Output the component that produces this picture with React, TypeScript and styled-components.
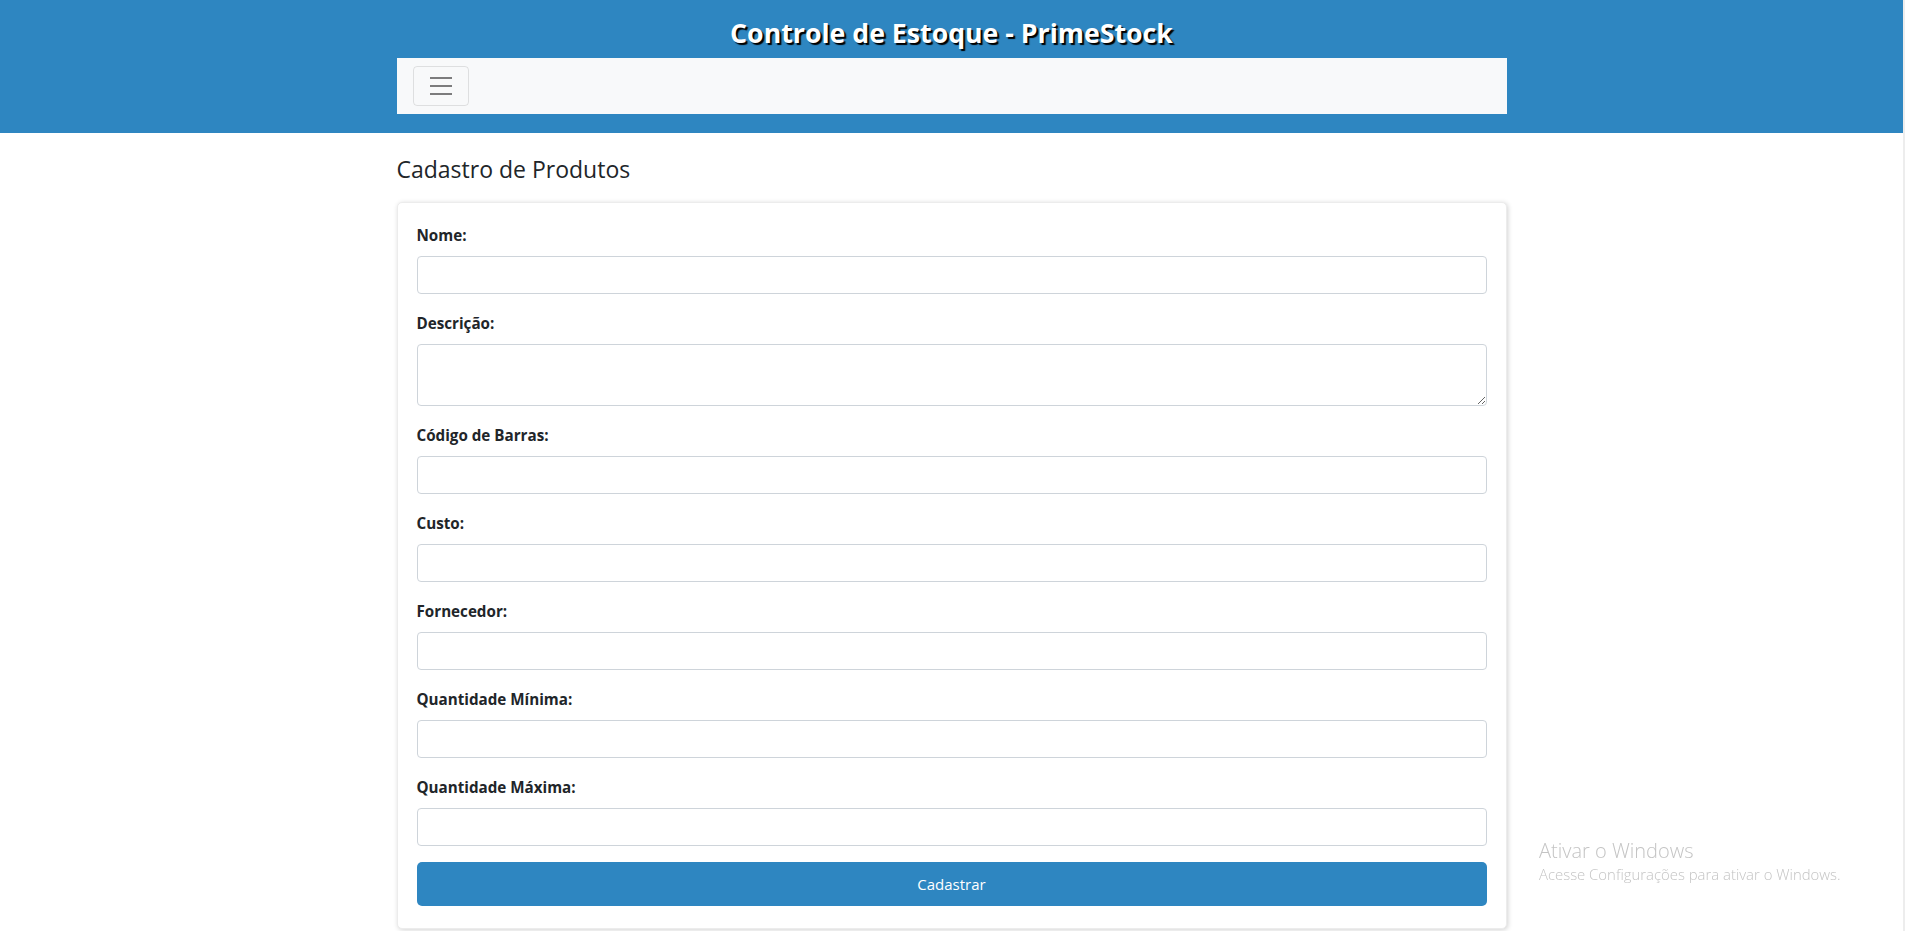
import React from "react";
import styled, { createGlobalStyle } from "styled-components";

const GlobalStyle = createGlobalStyle`
  * { box-sizing: border-box; }
  html, body { margin: 0; padding: 0; }
  body {
    margin-right: 2px;
    background: #ffffff;
    color: #212529;
    font-family: "Open Sans", "Noto Sans", Arial, sans-serif;
  }
`;

const Header = styled.header`
  background: #2e86c1;
  padding: 13px 0 19px;
`;

const SiteTitle = styled.h1`
  margin: 0 0 5px;
  text-align: center;
  color: #ffffff;
  font-size: 26.7px;
  line-height: 40px;
  font-weight: 700;
  text-shadow: 2px 2px 1px #000000;
`;

const NavBar = styled.nav`
  width: 1110px;
  margin: 0 auto;
  height: 56px;
  padding: 8px 16px;
  background: #f8f9fa;
  display: flex;
  align-items: center;
`;

const Toggler = styled.button`
  width: 56px;
  height: 40px;
  padding: 4px 12px;
  border: 1px solid rgba(0, 0, 0, 0.1);
  border-radius: 4px;
  background: transparent;
  display: flex;
  align-items: center;
  justify-content: center;
  cursor: pointer;
`;

const Main = styled.main`
  width: 1110px;
  margin: 0 auto;
`;

const PageTitle = styled.h2`
  margin: 22px 0 19px;
  font-size: 23px;
  line-height: 28px;
  font-weight: 400;
  color: #212529;
`;

const Card = styled.section`
  background: #ffffff;
  border: 1px solid #ececec;
  border-radius: 5px;
  box-shadow: 1px 1px 5px rgba(0, 0, 0, 0.18);
  padding: 20px 19px 22px;
  margin-bottom: 20px;
`;

const Form = styled.form`
  display: flex;
  flex-direction: column;
`;

const FieldGroup = styled.div`
  display: flex;
  flex-direction: column;
  margin-bottom: 17px;
  &:last-of-type {
    margin-bottom: 16px;
  }
`;

const Label = styled.label`
  display: block;
  font-size: 15.2px;
  line-height: 25px;
  font-weight: 700;
  color: #212529;
  margin-bottom: 8px;
`;

const Input = styled.input`
  display: block;
  width: 100%;
  height: 38px;
  padding: 6px 12px;
  font-family: inherit;
  font-size: 16px;
  color: #495057;
  background: #ffffff;
  border: 1px solid #ced4da;
  border-radius: 4px;
  outline: none;
`;

const TextArea = styled.textarea`
  display: block;
  width: 100%;
  height: 62px;
  padding: 6px 12px;
  font-family: inherit;
  font-size: 16px;
  color: #495057;
  background: #ffffff;
  border: 1px solid #ced4da;
  border-radius: 4px;
  outline: none;
`;

const SubmitButton = styled.button`
  width: 100%;
  height: 44px;
  border: none;
  border-radius: 5px;
  background: #2e86c1;
  color: #ffffff;
  font-family: inherit;
  font-size: 15px;
  cursor: pointer;
`;

const Watermark = styled.div`
  position: fixed;
  left: 1539px;
  top: 839px;
  color: #c4c4c4;
  pointer-events: none;
  font-family: "Open Sans", "Noto Sans", sans-serif;
  font-weight: 300;
`;

const WatermarkTitle = styled.div`
  font-size: 20px;
  line-height: 24px;
`;

const WatermarkText = styled.div`
  font-size: 14.9px;
  line-height: 22px;
`;

const ScrollStrip = styled.div`
  position: fixed;
  top: 0;
  right: 0;
  bottom: 0;
  width: 2px;
  background: #ededed;
`;

const fields: { label: string; multiline?: boolean }[] = [
  { label: "Nome:" },
  { label: "Descrição:", multiline: true },
  { label: "Código de Barras:" },
  { label: "Custo:" },
  { label: "Fornecedor:" },
  { label: "Quantidade Mínima:" },
  { label: "Quantidade Máxima:" },
];

export default function App() {
  return (
    <>
      <GlobalStyle />
      <Header>
        <SiteTitle>Controle de Estoque - PrimeStock</SiteTitle>
        <NavBar>
          <Toggler type="button" aria-label="Menu">
            <svg width="30" height="30" viewBox="0 0 30 30">
              <path
                d="M4 7h22M4 15h22M4 23h22"
                stroke="rgba(0,0,0,0.5)"
                strokeWidth="2"
                strokeLinecap="butt"
              />
            </svg>
          </Toggler>
        </NavBar>
      </Header>
      <Main>
        <PageTitle>Cadastro de Produtos</PageTitle>
        <Card>
          <Form onSubmit={(e) => e.preventDefault()}>
            {fields.map((f, i) => (
              <FieldGroup key={i}>
                <Label htmlFor={`f${i}`}>{f.label}</Label>
                {f.multiline ? <TextArea id={`f${i}`} /> : <Input id={`f${i}`} />}
              </FieldGroup>
            ))}
            <SubmitButton type="submit">Cadastrar</SubmitButton>
          </Form>
        </Card>
      </Main>
      <Watermark>
        <WatermarkTitle>Ativar o Windows</WatermarkTitle>
        <WatermarkText>Acesse Configurações para ativar o Windows.</WatermarkText>
      </Watermark>
      <ScrollStrip />
    </>
  );
}
